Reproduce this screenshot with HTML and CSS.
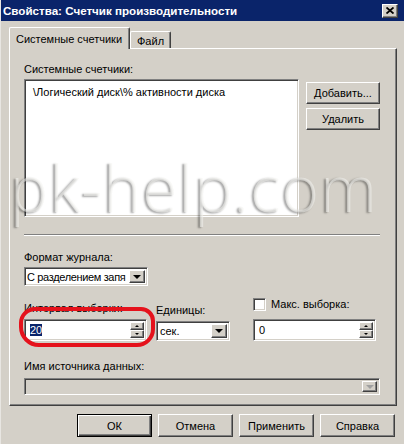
FILE: index.html
```html
<!DOCTYPE html>
<html lang="ru">
<head>
<meta charset="utf-8">
<title>Свойства: Счетчик производительности</title>
<link rel="stylesheet" href="styles.css">
</head>
<body>
<div class="window">
  <div class="titlebar">
    <span class="title">Свойства: Счетчик производительности</span>
    <span class="close"><svg width="8" height="7" viewBox="0 0 8 7"><path d="M0.5 0.5L7.5 6.5M7.5 0.5L0.5 6.5" stroke="#000" stroke-width="1.8"/></svg></span>
  </div>
  <div class="body">
    <div class="tabs">
      <div class="tab active">Системные счетчики</div>
      <div class="tab">Файл</div>
    </div>
    <div class="panel">
      <div class="lbl lbl-counters">Системные счетчики:</div>
      <div class="row-list">
        <div class="listbox sunken">
          <div class="list-item">\Логический диск\% активности диска</div>
        </div>
        <div class="side-buttons">
          <div class="btn btn-add">Добавить...</div>
          <div class="btn btn-del">Удалить</div>
        </div>
      </div>
      <div class="separator"></div>
      <div class="lbl lbl-format">Формат журнала:</div>
      <div class="combo sunken combo-format">
        <span class="combo-text">С разделением запя</span>
        <span class="arrow-btn"><span class="tri"></span></span>
      </div>
      <div class="row-fields">
        <div class="field field-interval">
          <div class="lbl">Интервал выборки:</div>
          <div class="spin sunken">
            <span class="spin-text"><span class="sel">20</span></span>
            <span class="spin-btns"><span class="spin-up"><span class="tri-up"></span></span><span class="spin-down"><span class="tri-s"></span></span></span>
          </div>
        </div>
        <div class="field field-units">
          <div class="lbl lbl-units">Единицы:</div>
          <div class="combo sunken combo-units">
            <span class="combo-text">сек.</span>
            <span class="arrow-btn"><span class="tri"></span></span>
          </div>
        </div>
        <div class="field field-max">
          <div class="check-row"><span class="checkbox"></span><span class="lbl">Макс. выборка:</span></div>
          <div class="spin sunken">
            <span class="spin-text">0</span>
            <span class="spin-btns"><span class="spin-up"><span class="tri-up"></span></span><span class="spin-down"><span class="tri-s"></span></span></span>
          </div>
        </div>
      </div>
      <div class="lbl lbl-source">Имя источника данных:</div>
      <div class="combo sunken combo-source disabled">
        <span class="combo-text"></span>
        <span class="arrow-btn"><span class="tri"></span></span>
      </div>
    </div>
    <div class="actions">
      <div class="btn btn-ok">ОК</div>
      <div class="btn">Отмена</div>
      <div class="btn">Применить</div>
      <div class="btn">Справка</div>
    </div>
  </div>
  <div class="highlight"></div>
  <div class="watermark">pk-help.com</div>
</div>
</body>
</html>
```
FILE: styles.css
```css
* { box-sizing: border-box; }
html, body { margin: 0; padding: 0; background: #d4d0c8; }
body {
  font-family: "Liberation Sans", Arial, sans-serif;
  font-size: 11px;
  color: #000;
}
.window {
  position: relative;
  width: 404px;
  height: 444px;
  background: #d4d0c8;
  overflow: hidden;
  border-left: 1px solid #e8e6e2;
}
.titlebar {
  height: 21px;
  margin-left: -1px;
  background: #0a246a;
  display: flex;
  align-items: center;
  justify-content: space-between;
  padding: 0 6px 0 3px;
}
.title {
  color: #fff;
  font-weight: bold;
  font-size: 11.6px;
}
.close {
  width: 16px;
  height: 14px;
  background: #d4d0c8;
  border-top: 1px solid #fff;
  border-left: 1px solid #fff;
  border-right: 1px solid #404040;
  border-bottom: 1px solid #404040;
  box-shadow: inset -1px -1px 0 #808080;
  display: flex;
  align-items: center;
  justify-content: center;
}
.body {
  padding: 6px 7px 0 8px;
}
.tabs {
  display: flex;
  align-items: flex-end;
  height: 21px;
  position: relative;
  z-index: 2;
}
.tab {
  height: 17px;
  padding: 2px 6px 0 6px;
  border-top: 1px solid #fff;
  border-left: 1px solid #fff;
  border-right: 1px solid #404040;
  box-shadow: inset -1px 0 0 #808080;
  border-radius: 2px 2px 0 0;
  display: flex;
  align-items: center;
  white-space: nowrap;
}
.tab.active {
  width: 121px;
  height: 22px;
  margin-bottom: -1px;
  background: #d4d0c8;
  padding: 0 0 0 6px;
}
.panel {
  height: 358px;
  border-top: 1px solid #fff;
  border-left: 1px solid #fff;
  border-right: 1px solid #404040;
  border-bottom: 1px solid #404040;
  box-shadow: inset -1px -1px 0 #808080;
  padding: 0 0 0 14px;
  display: flex;
  flex-direction: column;
  align-items: flex-start;
}
.lbl { line-height: 13px; white-space: nowrap; }
.lbl-counters { margin-top: 14px; }
.sunken {
  background: #fff;
  border-top: 1px solid #808080;
  border-left: 1px solid #808080;
  border-right: 1px solid #fff;
  border-bottom: 1px solid #fff;
  box-shadow: inset 1px 1px 0 #404040, inset -1px -1px 0 #d4d0c8;
}
.row-list {
  margin-top: 3px;
  display: flex;
  gap: 7px;
}
.listbox {
  width: 275px;
  height: 138px;
  padding: 6px 0 0 8px;
}
.list-item { line-height: 13px; }
.side-buttons {
  display: flex;
  flex-direction: column;
  padding-top: 3px;
}
.btn {
  height: 22px;
  width: 75px;
  display: flex;
  align-items: center;
  justify-content: center;
  background: #d4d0c8;
  border-top: 1px solid #fff;
  border-left: 1px solid #fff;
  border-right: 1px solid #404040;
  border-bottom: 1px solid #404040;
  box-shadow: inset -1px -1px 0 #808080;
  white-space: nowrap;
}
.btn-add { width: 74px; }
.btn-del { width: 74px; margin-top: 4px; }
.separator {
  margin-top: 17px;
  width: 356px;
  height: 2px;
  border-top: 1px solid #808080;
  border-bottom: 1px solid #fff;
}
.lbl-format { margin-top: 15px; }
.combo {
  height: 19px;
  display: flex;
  align-items: stretch;
  padding: 2px;
  overflow: hidden;
}
.combo-text {
  flex: 1;
  line-height: 15px;
  padding-left: 1px;
  white-space: nowrap;
  overflow: hidden;
}
.combo-format .combo-text { letter-spacing: -0.35px; padding-left: 0; }
.arrow-btn {
  width: 16px;
  flex: none;
  background: #d4d0c8;
  border-top: 1px solid #fff;
  border-left: 1px solid #fff;
  border-right: 1px solid #404040;
  border-bottom: 1px solid #404040;
  box-shadow: inset -1px -1px 0 #808080;
  display: flex;
  align-items: center;
  justify-content: center;
}
.tri {
  width: 0; height: 0;
  border-left: 4px solid transparent;
  border-right: 4px solid transparent;
  border-top: 4px solid #000;
}
.combo-format { margin-top: 3px; width: 124px; }
.row-fields {
  margin-top: 12px;
  display: flex;
  align-items: flex-end;
}
.field { display: flex; flex-direction: column; }
.field-interval { width: 123px; }
.field-interval .lbl { margin-bottom: 4px; }
.field-units { width: 74px; margin-left: 9px; }
.lbl-units { margin-bottom: 4px; }
.combo-units { height: 20px; }
.field-max { width: 123px; margin-left: 23px; }
.check-row { display: flex; align-items: center; gap: 5px; margin-bottom: 8px; }
.checkbox {
  width: 13px; height: 13px;
  background: #fff;
  border-top: 1px solid #808080;
  border-left: 1px solid #808080;
  border-right: 1px solid #fff;
  border-bottom: 1px solid #fff;
  box-shadow: inset 1px 1px 0 #404040, inset -1px -1px 0 #d4d0c8;
}
.spin {
  height: 22px;
  display: flex;
  padding: 2px;
}
.spin-text { flex: 1; line-height: 16px; padding-left: 3px; }
.sel { background: #0a246a; color: #fff; }
.spin-btns {
  width: 14px;
  display: flex;
  flex-direction: column;
}
.spin-up, .spin-down {
  flex: 1;
  background: #d4d0c8;
  border-top: 1px solid #fff;
  border-left: 1px solid #fff;
  border-right: 1px solid #404040;
  border-bottom: 1px solid #404040;
  box-shadow: inset -1px -1px 0 #808080;
  display: flex;
  align-items: center;
  justify-content: center;
}
.tri-up {
  width: 0; height: 0;
  border-left: 2px solid transparent;
  border-right: 2px solid transparent;
  border-bottom: 2px solid #000;
}
.tri-s {
  width: 0; height: 0;
  border-left: 2px solid transparent;
  border-right: 2px solid transparent;
  border-top: 2px solid #000;
}
.lbl-source { margin-top: 19px; }
.combo-source { margin-top: 5px; width: 356px; height: 17px; }
.disabled { background: #d4d0c8; }
.disabled .arrow-btn { width: 15px; }
.disabled .tri { border-top-color: #a0a0a0; }
.actions {
  display: flex;
  justify-content: flex-end;
  gap: 6px;
  margin-top: 8px;
  padding-right: 2px;
}
.actions .btn { height: 23px; width: 75px; }
.btn-ok {
  border: 1px solid #000 !important;
  box-shadow: inset 1px 1px 0 #fff, inset -1px -1px 0 #404040, inset -2px -2px 0 #808080;
}
.highlight {
  position: absolute;
  left: 18px;
  top: 307px;
  width: 136px;
  height: 40px;
  border: 4px solid #e5121c;
  border-radius: 16px 14px 18px 20px;
}
.watermark {
  position: absolute;
  left: 9px;
  top: 144px;
  font-family: "Open Sans", "DejaVu Sans", sans-serif;
  font-weight: 300;
  font-size: 64px;
  letter-spacing: 1.2px;
  color: rgba(245, 245, 242, 0.55);
  text-shadow: -2px 1px 2px rgba(0, 0, 0, 0.35);
  pointer-events: none;
  white-space: nowrap;
}
```
